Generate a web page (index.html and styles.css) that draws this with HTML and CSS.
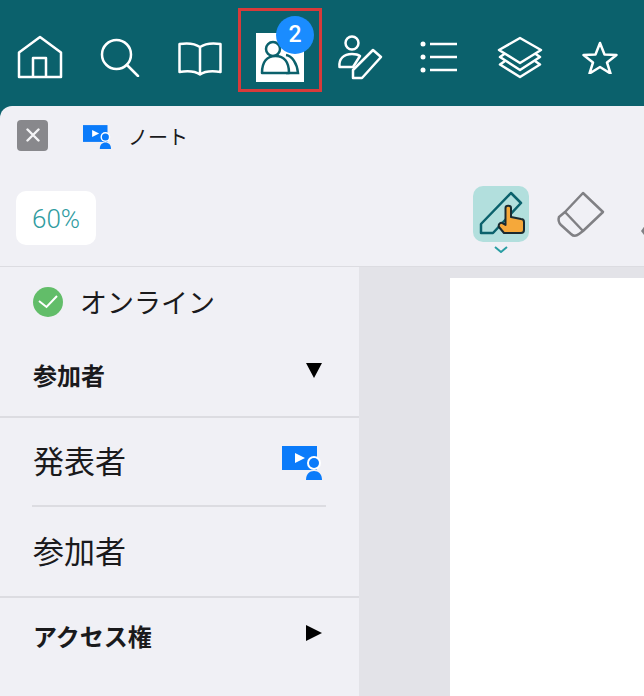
FILE: index.html
```html
<!DOCTYPE html>
<html lang="ja">
<head>
<meta charset="UTF-8" />
<title>ノート</title>
<link rel="stylesheet" href="styles.css">
</head>
<body>
<header class="toolbar">
    <div class="tool">
        <svg width="46" height="44" viewBox="0 0 46 44" class="line-icon"><path d="M23 2 44 17.500V42H2V17.500z"/><path d="M16 42V23h13v19"/></svg>
    </div>
    <div class="tool">
        <svg width="40" height="40" viewBox="0 0 40 40" class="line-icon"><circle cx="16.500" cy="17.500" r="14.500"/><path d="M27 28l11 11" stroke-linecap="round"/></svg>
    </div>
    <div class="tool">
        <svg class="book" width="44" height="34" viewBox="0 0 44 34"><path class="line-path" d="M22 5C17 1.500 8 1 1.500 2V30C8 29 17 29 22 32.500c5-3.500 14-3.500 20.500-2.500V2C36 1 27 1.500 22 5zV32.500"/></svg>
    </div>
    <div class="tool tool-active">
        <svg width="48" height="49" viewBox="0 0 48 49">
            <rect width="48" height="49" fill="#fff"/>
            <path d="M30 22c6 1 11 8 12 18H30" fill="none" stroke="#0b616c" stroke-width="2.500"/>
            <circle cx="17" cy="16" r="7" fill="#fff" stroke="#0b616c" stroke-width="2.500"/>
            <path d="M6 40c0-11 5-17 13.500-17S33 29 33 40z" fill="#fff" stroke="#0b616c" stroke-width="2.500" stroke-linejoin="round"/>
        </svg>
        <span class="badge">2</span>
        <span class="highlight"></span>
    </div>
    <div class="tool">
        <svg width="48" height="46" viewBox="0 0 48 46" class="line-icon"><circle cx="16" cy="9" r="6.500"/><path d="M3.500 33c-1-8 4-13 12.500-13 3.500 0 6 .500 8 2L17 33z"/><path d="M37 16l8 7-19 21h-9v-8z"/></svg>
    </div>
    <div class="tool">
        <svg width="40" height="32" viewBox="0 0 40 32" class="line-icon"><path d="M10 3h27M10 16h27M10 29h27"/><g class="dots"><circle cx="3" cy="3" r="2.500"/><circle cx="3" cy="16" r="2.500"/><circle cx="3" cy="29" r="2.500"/></g></svg>
    </div>
    <div class="tool">
        <svg width="46" height="43" viewBox="0 0 46 43" class="line-icon"><path d="M23 2 44 14 23 27 2 14z"/><path d="M8 17.500 3 21l20 13 20-13-5-3.500"/><path d="M8 25l-5 3.500L23 41l20-12.500-5-3.500"/></svg>
    </div>
    <div class="tool">
        <svg width="36" height="34" viewBox="0 0 36 34" class="line-icon"><path d="M18 3l4.500 11.500L34.500 15l-9.500 7.500 3.500 11L18 27 7.500 33.500l3.500-11L1.500 15l12-.5z"/></svg>
    </div>
</header>

<div class="panel">
    <div class="tab-row">
        <button class="close-btn">
            <svg width="14" height="14" viewBox="0 0 14 14"><path d="M1.500 1.500l11 11M12.500 1.500l-11 11" stroke="#f4f4f6" stroke-width="2.400" stroke-linecap="round"/></svg>
        </button>
        <svg class="tab-icon" width="28" height="24" viewBox="0 0 40 34"><use href="#presenter"/></svg>
        <span class="tab-title">ノート</span>
    </div>

    <div class="tools-row">
        <div class="zoom-box">60%</div>
        <div class="pen-wrap">
            <div class="pen-btn">
                <svg width="56" height="56" viewBox="0 0 56 56">
                    <path d="M8 38v9h12l28-30L38 7z" fill="none" stroke="#0b616c" stroke-width="2.500" stroke-linejoin="round"/>
                    <path d="M26 41l5 6h17c2 0 3-1 3-3v-8c0-2-1-3-3-3l-10-2V22c0-3-5.500-3-5.500 0v17L29 37c-2-1-4 2-3 4z" fill="#f5a83a" stroke="#1a2a30" stroke-width="2" stroke-linejoin="round"/>
                </svg>
            </div>
            <svg class="pen-caret" width="14" height="7" viewBox="0 0 14 7"><path d="M1 1l6 5 6-5" fill="none" stroke="#2a9ea3" stroke-width="2"/></svg>
        </div>
        <svg class="eraser" width="50" height="50" viewBox="0 0 50 50">
            <path d="M28 3l20 19-20 19-4 3c-3 2.500-5.500 2.500-8 0l-10-9c-3-3-3-5-2-8l6-5z" fill="none" stroke="#808084" stroke-width="2.500" stroke-linejoin="round"/>
            <path d="M10 22l18 19" fill="none" stroke="#808084" stroke-width="2.500"/>
        </svg>
        <svg class="cut-icon" width="10" height="14" viewBox="0 0 10 14"><path d="M6 1 1 8l3 4 6-2V1z" fill="#808084"/></svg>
    </div>

    <div class="content">
        <aside class="sidebar">
            <div class="status">
                <svg width="30" height="30" viewBox="0 0 30 30"><circle cx="15" cy="15" r="15" fill="#62bd69"/><path d="M6 14l7.500 6L24 9" fill="none" stroke="#fff" stroke-width="2"/></svg>
                <span>オンライン</span>
            </div>
            <div class="section-head section-first">
                <span class="label">参加者</span>
                <span class="arrow-down"></span>
            </div>
            <div class="role-list">
                <div class="role role-presenter">
                    <span class="label">発表者</span>
                    <svg class="role-icon" width="40" height="34" viewBox="0 0 40 34"><use href="#presenter"/></svg>
                </div>
                <div class="role role-last">
                    <span class="label">参加者</span>
                </div>
            </div>
            <div class="section-head section-access">
                <span class="label">アクセス権</span>
                <span class="arrow-right"></span>
            </div>
        </aside>
        <main class="canvas">
            <div class="page"></div>
        </main>
    </div>
</div>

<svg width="0" height="0" class="defs">
    <defs>
        <g id="presenter">
            <rect width="35" height="24" fill="#0a7bfa"/>
            <path d="M13 7l10 5-10 5z" fill="#fff"/>
            <circle cx="32" cy="17" r="7" fill="#fff"/>
            <circle cx="32" cy="17" r="5" fill="#0a7bfa"/>
            <path d="M24 34c0-6 3.500-9 8-9s8 3 8 9z" fill="#0a7bfa"/>
        </g>
    </defs>
</svg>
</body>
</html>
```

FILE: styles.css
```css
body {
    margin: 0;
    width: 644px;
    height: 696px;
    overflow: hidden;
    background-color: #0b616c;
    font-family: "Noto Sans CJK JP", "Liberation Sans", sans-serif;
    color: #1a1a1c;
}
.toolbar {
    display: flex;
    height: 106px;
}
.tool {
    position: relative;
    width: 80px;
    height: 114px;
    display: flex;
    justify-content: center;
    align-items: center;
}
.line-icon,
.line-path {
    fill: none;
    stroke: #fff;
    stroke-width: 2.500;
    stroke-linejoin: round;
}
.dots {
    fill: #fff;
    stroke: none;
}
.book {
    margin-top: 3px;
}
.badge {
    position: absolute;
    left: 36px;
    top: 16px;
    width: 38px;
    height: 38px;
    border-radius: 50%;
    background-color: #1a8cff;
    color: #fff;
    font-family: "Roboto", sans-serif;
    font-size: 23px;
    font-weight: 500;
    line-height: 38px;
    text-align: center;
}
.highlight {
    position: absolute;
    left: -2px;
    top: 8px;
    width: 78px;
    height: 78px;
    border: 3px solid #d83a3a;
}
.panel {
    height: 590px;
    background-color: #f0f0f5;
    border-radius: 12px 0 0 0;
    overflow: hidden;
}
.tab-row {
    display: flex;
    align-items: center;
    height: 58px;
    padding: 0 0 2px 17px;
}
.close-btn {
    width: 31px;
    height: 31px;
    padding: 0;
    border: none;
    border-radius: 4px;
    background-color: #88888c;
    display: flex;
    justify-content: center;
    align-items: center;
}
.tab-icon {
    margin: 3px 0 0 35px;
}
.tab-title {
    margin: 2px 0 0 17px;
    font-size: 20px;
}
.tools-row {
    display: flex;
    align-items: flex-start;
    height: 101px;
    padding-left: 16px;
    border-bottom: 1px solid #dcdce1;
    box-sizing: border-box;
    overflow: hidden;
}
.zoom-box {
    flex-shrink: 0;
    width: 80px;
    height: 54px;
    margin-top: 25px;
    border-radius: 10px;
    background-color: #fff;
    color: #2f9c9f;
    font-family: "Roboto", sans-serif;
    font-size: 26px;
    font-weight: 300;
    line-height: 56px;
    text-align: center;
}
.pen-wrap {
    flex-shrink: 0;
    margin-left: 377px;
    margin-top: 20px;
    display: flex;
    flex-direction: column;
    align-items: center;
}
.pen-btn {
    width: 56px;
    height: 56px;
    border-radius: 10px;
    background-color: #b2dfdd;
}
.pen-caret {
    margin-top: 4px;
}
.eraser {
    margin-left: 26px;
    margin-top: 24px;
    flex-shrink: 0;
}
.cut-icon {
    margin-left: 35px;
    margin-top: 57px;
    flex-shrink: 0;
}
.content {
    display: flex;
    height: 429px;
}
.sidebar {
    width: 359px;
    flex-shrink: 0;
}
.status {
    display: flex;
    align-items: center;
    gap: 17px;
    height: 69px;
    padding-left: 33px;
    font-size: 27px;
}
.section-head {
    display: flex;
    justify-content: space-between;
    align-items: center;
    padding: 0 37px 0 33px;
    font-size: 24px;
    font-weight: 700;
}
.label {
    margin-bottom: 4px;
}
.section-first {
    height: 80px;
    border-bottom: 2px solid #dcdce1;
}
.role-list {
    padding: 0 33px 0 32px;
    border-bottom: 2px solid #dcdce1;
}
.role {
    display: flex;
    justify-content: space-between;
    align-items: center;
    font-size: 31px;
}
.role .label {
    margin-left: 1px;
}
.role-presenter {
    height: 87px;
    border-bottom: 2px solid #dcdce1;
}
.role-last {
    height: 89px;
}
.role-icon {
    margin: 2px 4px 0 0;
}
.section-access {
    height: 80px;
}
.section-access .label {
    margin-bottom: 6px;
}
.arrow-down {
    width: 0;
    height: 0;
    border-left: 8px solid transparent;
    border-right: 8px solid transparent;
    border-top: 15px solid #000;
    margin-top: -12px;
}
.arrow-right {
    width: 0;
    height: 0;
    border-top: 8px solid transparent;
    border-bottom: 8px solid transparent;
    border-left: 16px solid #000;
    margin-top: -10px;
}
.canvas {
    flex: 1;
    background-color: #e3e3e8;
    padding: 11px 0 0 91px;
}
.page {
    height: 100%;
    background-color: #fff;
}
.defs {
    position: absolute;
}
```
